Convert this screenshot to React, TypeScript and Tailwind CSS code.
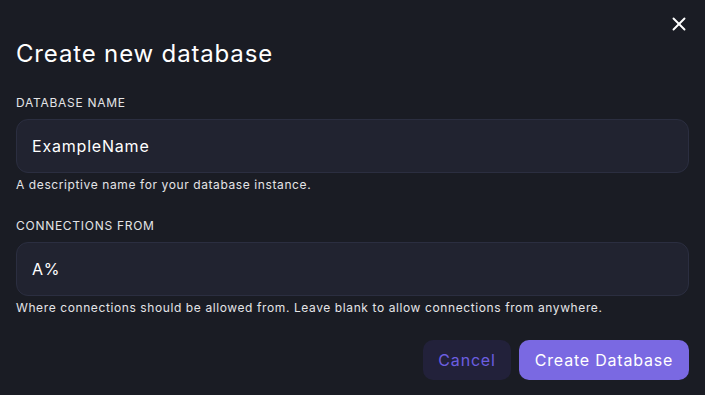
import { X } from "lucide-react";

export default function App() {
  return (
    <div
      className="relative w-[705px] h-[395px] bg-[#1a1c24] text-white px-4 overflow-hidden"
      style={{ fontFamily: 'Inter, "Open Sans", sans-serif' }}
    >
      <button className="absolute right-[15px] top-[13px] text-white">
        <X size={22} strokeWidth={2.1} />
      </button>

      <h1 className="pt-[38px] text-[24px] leading-[32px] font-normal tracking-[0.035em]">Create new database</h1>

      {/* Database name */}
      <div className="mt-[25px]">
        <label className="block text-[12px] leading-[16px] uppercase tracking-[0.06em] text-[#e4e4e7]">Database Name</label>
        <div className="mt-[8px] h-[54px] rounded-[12px] border border-[#2b2e40] bg-[#212330] flex items-center px-[15px] text-[16px] tracking-[0.05em]">
          ExampleName
        </div>
        <p className="mt-[4px] text-[12px] leading-[16px] tracking-[0.05em] text-[#e4e4e7]">A descriptive name for your database instance.</p>
      </div>

      {/* Connections from */}
      <div className="mt-[25px]">
        <label className="block text-[12px] leading-[16px] uppercase tracking-[0.06em] text-[#e4e4e7]">Connections From</label>
        <div className="mt-[8px] h-[54px] rounded-[12px] border border-[#2b2e40] bg-[#212330] flex items-center px-[15px] text-[16px] tracking-[0.05em]">
          A%
        </div>
        <p className="mt-[4px] text-[12px] leading-[16px] tracking-[0.05em] text-[#e4e4e7]">
          Where connections should be allowed from. Leave blank to allow connections from anywhere.
        </p>
      </div>

      <div className="mt-[24px] flex justify-end gap-2">
        <button className="h-[40px] w-[88px] rounded-[10px] bg-[#22213a] text-[#6c5ee0] text-[16px] tracking-[0.05em]">Cancel</button>
        <button className="h-[40px] w-[170px] rounded-[10px] bg-[#7a69e2] text-white text-[16px] tracking-[0.05em]">Create Database</button>
      </div>
    </div>
  );
}
